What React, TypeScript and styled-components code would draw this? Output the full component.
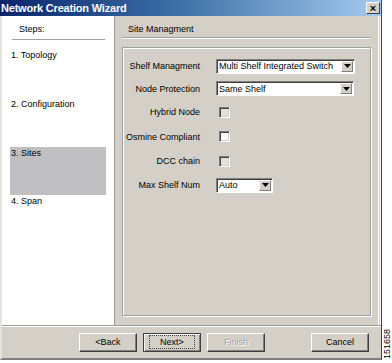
import React from "react";
import styled, { createGlobalStyle } from "styled-components";

const Global = createGlobalStyle`
  html, body { margin: 0; padding: 0; background: #ffffff; }
  body { font-family: Tahoma, "Liberation Sans", "DejaVu Sans", sans-serif; font-size: 9px; color: #000; }
  * { box-sizing: border-box; }
`;

const Page = styled.div`
  width: 392px;
  height: 363px;
  display: flex;
  background: #fff;
  overflow: hidden;
`;

const Window = styled.div`
  width: 382px;
  height: 360px;
  display: flex;
  flex-direction: column;
  background: #d4d0c8;
  border-right: 1px solid #404040;
  border-left: 2px solid #e4e2dc;
  border-bottom: 2px solid #808080;
`;

const TitleBar = styled.div`
  height: 16px;
  flex: none;
  display: flex;
  align-items: center;
  justify-content: space-between;
  padding: 0 1px 0 1px;
  background: linear-gradient(to right, #0a246a 0%, #3a6ea5 45%, #a6caf0 100%);
  margin-left: -2px;
`;

const Title = styled.span`
  color: #fff;
  font-weight: bold;
  font-size: 11px;
  letter-spacing: -0.2px;
`;

const CloseBtn = styled.div`
  width: 14px;
  height: 12px;
  background: #d4d0c8;
  border: 1px solid;
  border-color: #fff #404040 #404040 #fff;
  display: flex;
  align-items: center;
  justify-content: center;
  font-weight: bold;
  font-size: 11px;
  line-height: 1;
  color: #000;
`;

const Body = styled.div`
  flex: 1;
  display: flex;
  min-height: 0;
`;

const StepsPanel = styled.div`
  width: 113px;
  background: #fff;
  border-right: 1px solid #9c9a94;
  padding: 0 8px;
  display: flex;
  flex-direction: column;
`;

const StepsHeader = styled.div`
  height: 24px;
  padding: 8px 0 0 7px;
  border-bottom: 1px solid #a0a0a0;
  margin: 0 0 0 2px;
  width: 93px;
`;

const Step = styled.div<{ $active?: boolean; $h: number }>`
  height: ${(p) => p.$h}px;
  padding: 1px 0 0 1px;
  background: ${(p) => (p.$active ? "#c0bfc2" : "transparent")};
  width: 96px;
`;

const Content = styled.div`
  flex: 1;
  display: flex;
  flex-direction: column;
  padding: 0 7px 9px 7px;
  border-right: 3px double #fcfcfc;
`;

const ContentHeader = styled.div`
  height: 22px;
  padding: 8px 0 0 6px;
  border-bottom: 1px solid #a0a0a0;
  box-shadow: 0 1px 0 #fff;
`;

const Group = styled.div`
  flex: 1;
  margin-top: 9px;
  border: 1px solid #a0a0a0;
  box-shadow: inset 1px 1px 0 #fff, 1px 1px 0 #fff;
  padding: 7px 0 0 0;
  display: grid;
  grid-template-columns: 77px auto;
  grid-auto-rows: min-content;
  column-gap: 16px;
  align-content: start;
`;

const Label = styled.div<{ $h: number }>`
  height: ${(p) => p.$h}px;
  text-align: right;
  display: flex;
  align-items: center;
  justify-content: flex-end;
  white-space: nowrap;
`;

const Field = styled.div<{ $h: number }>`
  height: ${(p) => p.$h}px;
  display: flex;
  align-items: center;
`;

const Select = styled.div<{ $w: number }>`
  width: ${(p) => p.$w}px;
  height: 15px;
  background: #fff;
  border: 1px solid;
  border-color: #808080 #fff #fff #808080;
  box-shadow: inset 1px 1px 0 #404040;
  display: flex;
  align-items: center;
  justify-content: space-between;
  padding-left: 2px;
  white-space: nowrap;
`;

const Arrow = styled.div`
  width: 12px;
  height: 11px;
  margin-right: 1px;
  background: #d4d0c8;
  border: 1px solid;
  border-color: #fff #808080 #808080 #fff;
  display: flex;
  align-items: center;
  justify-content: center;
`;

const Check = styled.div<{ $disabled?: boolean }>`
  width: 11px;
  height: 11px;
  margin-left: 3px;
  background: ${(p) => (p.$disabled ? "#e4e2dc" : "#fff")};
  border: 1px solid;
  border-color: #808080 #fff #fff #808080;
  box-shadow: inset 1px 1px 0 #404040, inset -1px -1px 0 #d4d0c8;
`;

const ButtonBar = styled.div`
  height: 33px;
  flex: none;
  border-top: 1px solid #9c9a94;
  box-shadow: inset 0 1px 0 #fff;
  display: flex;
  align-items: center;
  padding: 0 12px 0 77px;
  gap: 6px;
`;

const Button = styled.div<{ $disabled?: boolean; $focus?: boolean }>`
  width: 58px;
  height: 19px;
  display: flex;
  align-items: center;
  justify-content: center;
  background: #d4d0c8;
  border: 1px solid;
  border-color: ${(p) => (p.$focus ? "#404040" : "#fff #404040 #404040 #fff")};
  box-shadow: ${(p) =>
    p.$focus
      ? "inset 1px 1px 0 #fff, inset -1px -1px 0 #808080"
      : "inset -1px -1px 0 #808080"};
  color: ${(p) => (p.$disabled ? "#a0a0a0" : "#000")};
  text-shadow: ${(p) => (p.$disabled ? "1px 1px 0 #fff" : "none")};
`;

const FocusText = styled.span`
  outline: 1px dotted #404040;
  outline-offset: 1px;
  padding: 0 9px;
`;

const Spacer = styled.div`
  flex: 1;
`;

const SideStrip = styled.div`
  flex: 1;
  display: flex;
  align-items: flex-end;
  justify-content: center;
  padding-bottom: 4px;
`;

const Ref = styled.div`
  writing-mode: vertical-rl;
  transform: rotate(180deg);
  font-size: 9px;
  font-family: "Liberation Sans", sans-serif;
  color: #000;
`;

const ArrowIcon = () => (
  <svg width="7" height="4" viewBox="0 0 7 4">
    <path d="M0 0h7L3.5 4z" fill="#000" />
  </svg>
);

type Row = {
  label: string;
  kind: "select" | "check";
  value?: string;
  w?: number;
  h: number;
  disabled?: boolean;
};

const rows: Row[] = [
  { label: "Shelf Managment", kind: "select", value: "Multi Shelf Integrated Switch", w: 139, h: 22 },
  { label: "Node Protection", kind: "select", value: "Same Shelf", w: 138, h: 23 },
  { label: "Hybrid Node", kind: "check", h: 24, disabled: true },
  { label: "Osmine Compliant", kind: "check", h: 25 },
  { label: "DCC chain", kind: "check", h: 24, disabled: true },
  { label: "Max Shelf Num", kind: "select", value: "Auto", w: 57, h: 24 },
];

export default function App() {
  return (
    <>
      <Global />
      <Page>
        <Window>
          <TitleBar>
            <Title>Network Creation Wizard</Title>
            <CloseBtn>×</CloseBtn>
          </TitleBar>
          <Body>
            <StepsPanel>
              <StepsHeader>Steps:</StepsHeader>
              <Step $h={9} />
              <Step $h={49}>1. Topology</Step>
              <Step $h={49}>2. Configuration</Step>
              <Step $h={48} $active>
                3. Sites
              </Step>
              <Step $h={20}>4. Span</Step>
            </StepsPanel>
            <Content>
              <ContentHeader>Site Managment</ContentHeader>
              <Group>
                {rows.map((r) => (
                  <React.Fragment key={r.label}>
                    <Label $h={r.h}>{r.label}</Label>
                    <Field $h={r.h}>
                      {r.kind === "select" ? (
                        <Select $w={r.w!}>
                          <span>{r.value}</span>
                          <Arrow>
                            <ArrowIcon />
                          </Arrow>
                        </Select>
                      ) : (
                        <Check $disabled={r.disabled} />
                      )}
                    </Field>
                  </React.Fragment>
                ))}
              </Group>
            </Content>
          </Body>
          <ButtonBar>
            <Button>&lt;Back</Button>
            <Button $focus>
              <FocusText>Next&gt;</FocusText>
            </Button>
            <Button $disabled>Finish</Button>
            <Spacer />
            <Button>Cancel</Button>
          </ButtonBar>
        </Window>
        <SideStrip>
          <Ref>151658</Ref>
        </SideStrip>
      </Page>
    </>
  );
}
